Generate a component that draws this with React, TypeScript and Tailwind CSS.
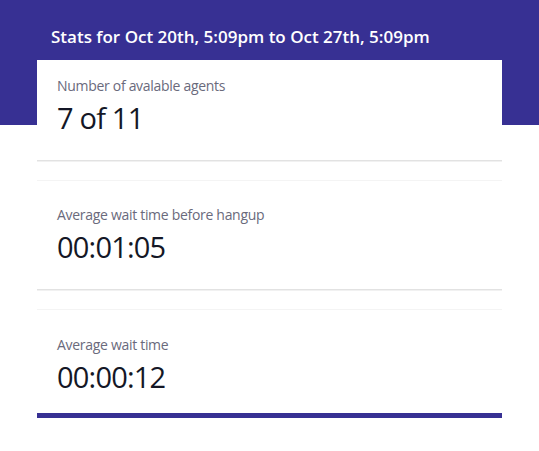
const stats = [
  { label: 'Number of avalable agents', value: '7 of 11', box: 'pt-4 pb-6 shadow-[0_1px_0_#e2e2e2,0_2px_0_#f1f1f1]' },
  { label: 'Average wait time before hangup', value: '00:01:05', box: 'mt-5 border-t border-[#f4f4f4] pt-6 pb-6 shadow-[0_1px_0_#e2e2e2,0_2px_0_#f1f1f1]' },
  { label: 'Average wait time', value: '00:00:12', box: 'mt-5 border-t border-[#f4f4f4] pt-[25px] pb-[18px] border-b-[5px] border-b-[#373093]' },
]

export default function App() {
  return (
    <div
      className="min-h-screen bg-[linear-gradient(to_bottom,#373093_125px,#ffffff_125px)] pt-[25px] font-['Open_Sans',sans-serif]"
    >
      <div className="mx-[37px]">
        <h1 className="mb-[11px] pl-[14px] text-[17px] leading-6 font-semibold text-white">
          Stats for Oct 20th, 5:09pm to Oct 27th, 5:09pm
        </h1>
        {stats.map((s) => (
          <div key={s.label} className={`bg-white px-5 ${s.box}`}>
            <div className="text-[14px] leading-5 font-medium tracking-[-0.3px] text-[#6a6a7c]">{s.label}</div>
            <div className="mt-1 text-[29px] leading-9 tracking-[-0.8px] text-[#141726]">{s.value}</div>
          </div>
        ))}
      </div>
    </div>
  )
}
